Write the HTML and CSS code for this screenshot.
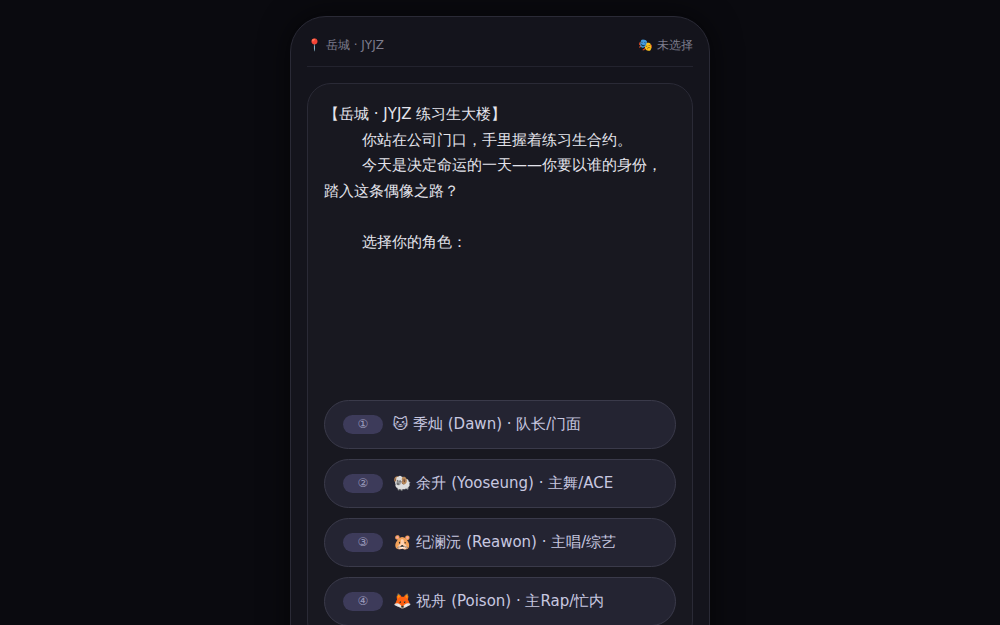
FILE: index.html
```html
<!DOCTYPE html>
<html>
<head>
<meta charset="utf-8">
<title>岳城 · JYJZ</title>
<link rel="stylesheet" href="styles.css">
</head>
<body>
<main class="phone">
  <header class="status">
    <span>📍 岳城 · JYJZ</span>
    <span>🎭 未选择</span>
  </header>
  <section class="card">
    <div class="story">
      <p class="title">【岳城 · JYJZ 练习生大楼】</p>
      <p class="para">你站在公司门口，手里握着练习生合约。</p>
      <p class="para">今天是决定命运的一天——你要以谁的身份，踏入这条偶像之路？</p>
      <p class="blank">&nbsp;</p>
      <p class="para">选择你的角色：</p>
    </div>
    <div class="choices">
      <button class="choice"><span class="num">①</span><span>🐱 季灿 (Dawn) · 队长/门面</span></button>
      <button class="choice"><span class="num">②</span><span>🐏 余升 (Yooseung) · 主舞/ACE</span></button>
      <button class="choice"><span class="num">③</span><span>🐹 纪澜沅 (Reawon) · 主唱/综艺</span></button>
      <button class="choice"><span class="num">④</span><span>🦊 祝舟 (Poison) · 主Rap/忙内</span></button>
    </div>
  </section>
</main>
</body>
</html>
```
FILE: styles.css
```css
* { box-sizing: border-box; }
html, body { margin: 0; height: 100%; overflow: hidden; }
body {
  background: #0a0a0f;
  font-family: "DejaVu Sans", sans-serif;
  display: flex;
  justify-content: center;
  padding-top: 16px;
}
.phone {
  width: 420px;
  height: 760px;
  flex: none;
  background: #14141c;
  border: 1px solid #2a2a36;
  border-radius: 36px;
  padding: 16px;
  box-shadow: 0 0 30px rgba(0, 0, 0, .6);
}
.status {
  display: flex;
  justify-content: space-between;
  align-items: center;
  height: 34px;
  padding-top: 2px;
  padding-bottom: 10px;
  border-bottom: 1px solid #23232e;
  margin-bottom: 16px;
  font-size: 12px;
  color: #7d7d8d;
}
.card {
  background: #181820;
  border: 1px solid #2a2a36;
  border-radius: 24px;
  padding: 18px 16px;
}
.story {
  min-height: 298px;
  font-size: 15px;
  line-height: 25.5px;
  color: #e4e4ec;
}
.story p { margin: 0; }
.para { text-indent: 38px; }
.choices {
  display: flex;
  flex-direction: column;
  gap: 10px;
}
.choice {
  display: flex;
  align-items: center;
  gap: 9.6px;
  width: 100%;
  height: 49px;
  padding: 0 18px;
  background: #242432;
  border: 1px solid #3a3a4a;
  border-radius: 24.5px;
  font-family: inherit;
  font-size: 15px;
  color: #c8c8e0;
  text-align: left;
}
.num {
  width: 40px;
  height: 19px;
  border-radius: 10px;
  background: #3d3b5a;
  color: #9a9aba;
  font-size: 12px;
  line-height: 19px;
  text-align: center;
}
```
